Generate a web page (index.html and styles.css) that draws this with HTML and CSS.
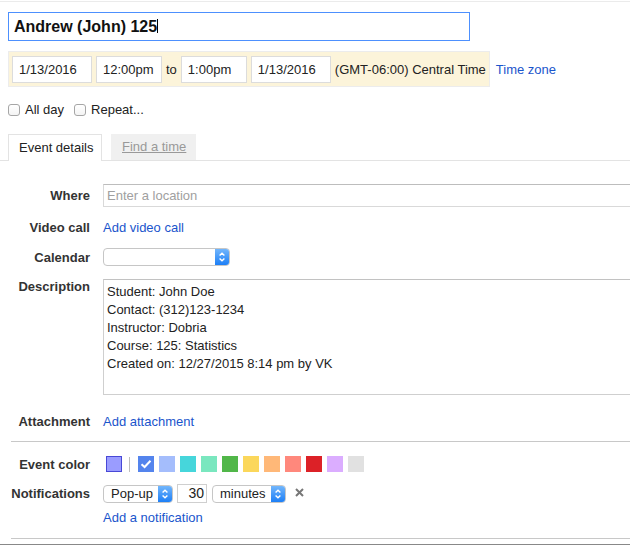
FILE: index.html
```html
<!DOCTYPE html>
<html>
<head>
<meta charset="utf-8">
<title>Event</title>
<link rel="stylesheet" href="styles.css">
</head>
<body>
<div class="page">
  <div class="title">Andrew (John) 125<span class="caret"></span></div>

  <div class="when-row">
    <div class="when">
      <div class="field date">1/13/2016</div>
      <div class="field time">12:00pm</div>
      <span class="to">to</span>
      <div class="field time">1:00pm</div>
      <div class="field date">1/13/2016</div>
      <span class="tz">(GMT-06:00) Central Time</span>
    </div>
    <a class="link tzlink">Time zone</a>
  </div>

  <div class="checks">
    <label class="check"><span class="box"></span>All day</label>
    <label class="check"><span class="box"></span>Repeat...</label>
  </div>

  <div class="tabs">
    <div class="tab active">Event details</div>
    <div class="tab inactive"><span>Find a time</span></div>
  </div>

  <div class="row where">
    <div class="label">Where</div>
    <div class="loc">Enter a location</div>
  </div>

  <div class="row video">
    <div class="label">Video call</div>
    <a class="link">Add video call</a>
  </div>

  <div class="row calendar">
    <div class="label">Calendar</div>
    <div class="select cal">
      <span class="sel-text"></span>
      <span class="sel-btn"><svg width="8" height="12" viewBox="0 0 8 12"><path d="M1.6 4.6 L4 2.2 L6.4 4.6 M1.6 7.4 L4 9.8 L6.4 7.4" fill="none" stroke="#fff" stroke-width="1.4"/></svg></span>
    </div>
  </div>

  <div class="row desc">
    <div class="label top">Description</div>
    <div class="textarea">
      <div>Student: John Doe</div>
      <div>Contact: (312)123-1234</div>
      <div>Instructor: Dobria</div>
      <div>Course: 125: Statistics</div>
      <div>Created on: 12/27/2015 8:14 pm by VK</div>
    </div>
  </div>

  <div class="row attach">
    <div class="label">Attachment</div>
    <a class="link">Add attachment</a>
  </div>

  <div class="rule first"></div>

  <div class="row colors">
    <div class="label">Event color</div>
    <div class="swatches">
      <span class="sw current"></span>
      <span class="sep"></span>
      <span class="sw checked"><svg width="12" height="10" viewBox="0 0 12 10"><path d="M1.5 5.2 L4.6 8 L10.5 1.8" fill="none" stroke="#fff" stroke-width="2"/></svg></span>
      <span class="sw c2"></span>
      <span class="sw c3"></span>
      <span class="sw c4"></span>
      <span class="sw c5"></span>
      <span class="sw c6"></span>
      <span class="sw c7"></span>
      <span class="sw c8"></span>
      <span class="sw c9"></span>
      <span class="sw c10"></span>
      <span class="sw c11"></span>
    </div>
  </div>

  <div class="row notif">
    <div class="label">Notifications</div>
    <div class="notif-controls">
      <div class="select popup">
        <span class="sel-text">Pop-up</span>
        <span class="sel-btn"><svg width="8" height="12" viewBox="0 0 8 12"><path d="M1.6 4.6 L4 2.2 L6.4 4.6 M1.6 7.4 L4 9.8 L6.4 7.4" fill="none" stroke="#fff" stroke-width="1.4"/></svg></span>
      </div>
      <div class="num">30</div>
      <div class="select minutes">
        <span class="sel-text">minutes</span>
        <span class="sel-btn"><svg width="8" height="12" viewBox="0 0 8 12"><path d="M1.6 4.6 L4 2.2 L6.4 4.6 M1.6 7.4 L4 9.8 L6.4 7.4" fill="none" stroke="#fff" stroke-width="1.4"/></svg></span>
      </div>
      <span class="remove"><svg width="9" height="9" viewBox="0 0 9 9"><path d="M1 1 L8 8 M8 1 L1 8" stroke="#777" stroke-width="2"/></svg></span>
    </div>
  </div>

  <div class="row addnotif">
    <div class="label"></div>
    <a class="link">Add a notification</a>
  </div>

  <div class="rule second"></div>
  <div class="bottom-line"></div>
</div>
</body>
</html>
```

FILE: styles.css
```css
html, body {
  margin: 0;
  padding: 0;
  width: 630px;
  height: 545px;
  overflow: hidden;
  background: #fff;
}

body {
  font-family: "Liberation Sans", Arial, sans-serif;
  font-size: 13px;
  color: #222;
}

.page {
  margin-top: 1px;
  border-top: 1px solid #ebebeb;
  width: 630px;
}

.title {
  margin: 10px 0 0 8px;
  width: 462px;
  height: 29px;
  box-sizing: border-box;
  border: 1px solid #4d90fe;
  padding-left: 5px;
  font-size: 16px;
  font-weight: bold;
  line-height: 27px;
  color: #111;
}

.caret {
  display: inline-block;
  width: 1px;
  height: 14px;
  background: #000;
  vertical-align: -1px;
}

.when-row {
  display: flex;
  align-items: center;
  margin: 10px 0 0 8px;
}

.when {
  display: flex;
  align-items: flex-start;
  gap: 4px;
  box-sizing: border-box;
  height: 36px;
  padding: 4px 3px 0 3px;
  background: #fcf4da;
  border: 1px solid #ececec;
}

.field {
  box-sizing: border-box;
  height: 27px;
  border: 1px solid #dcdcdc;
  background: #fff;
  padding-left: 6px;
  line-height: 25px;
}

.field.date { width: 80px; }
.field.time { width: 66px; }

.to, .tz {
  line-height: 27px;
}

.tzlink {
  margin-left: 6px;
}

.link {
  color: #1a55cc;
  cursor: pointer;
}

.checks {
  display: flex;
  align-items: center;
  height: 14px;
  margin: 16px 0 0 8px;
}

.check {
  display: flex;
  align-items: center;
  margin-right: 10px;
  line-height: 14px;
}

.box {
  width: 12px;
  height: 12px;
  box-sizing: border-box;
  border: 1px solid #a6a6a6;
  border-radius: 3px;
  background: linear-gradient(#fff, #f4f4f4);
  margin-right: 5px;
}

.tabs {
  display: flex;
  align-items: flex-end;
  gap: 9px;
  height: 26px;
  margin-top: 17px;
  padding-left: 8px;
  border-bottom: 1px solid #e3e3e3;
}

.tab {
  box-sizing: border-box;
  height: 26px;
  line-height: 26px;
}

.tab.active {
  width: 94px;
  height: 27px;
  margin-bottom: -1px;
  padding-left: 10px;
  background: #fff;
  border: 1px solid #e3e3e3;
  border-bottom: none;
  color: #222;
}

.tab.inactive {
  width: 85px;
  padding-left: 11px;
  background: #f0f0f0;
  color: #999;
}

.tab.inactive span {
  text-decoration: underline;
}

.row {
  display: flex;
  align-items: center;
  height: 18px;
}

.label {
  flex: none;
  width: 90px;
  margin-right: 13px;
  text-align: right;
  font-weight: bold;
  color: #333;
}

.label.top {
  align-self: flex-start;
  line-height: 15px;
}

.row.where { margin-top: 23px; height: 23px; }
.row.video { margin-top: 11px; }
.row.calendar { margin-top: 12px; }
.row.desc { margin-top: 13px; height: 116px; align-items: flex-start; }
.row.attach { margin-top: 17px; }
.row.colors { margin-top: 13px; }
.row.notif { margin-top: 11px; height: 19px; }
.row.addnotif { margin-top: 5px; }

.loc {
  flex: none;
  box-sizing: border-box;
  width: 530px;
  height: 23px;
  border: 1px solid #d9d9d9;
  border-top-color: #bdbdbd;
  padding-left: 3px;
  line-height: 21px;
  color: #a0a0a0;
}

.select {
  display: flex;
  box-sizing: border-box;
  height: 18px;
  border: 1px solid #c6c6c6;
  border-radius: 4px;
  overflow: hidden;
  background: #fff;
}

.sel-text {
  flex: 1;
  padding-left: 7px;
  line-height: 16px;
  color: #222;
}

.sel-btn {
  width: 14px;
  display: flex;
  align-items: center;
  justify-content: center;
  background: linear-gradient(#72b6fc, #1d7ff6);
}

.select.cal { width: 127px; }
.select.popup { width: 70px; }
.select.minutes { width: 74px; margin-left: 1px; }

.textarea {
  flex: none;
  box-sizing: border-box;
  width: 530px;
  height: 116px;
  border: 1px solid #cfcfcf;
  border-top-color: #c2c2c2;
  padding: 3px 3px;
  line-height: 18px;
  color: #222;
}

.rule {
  height: 1px;
  background: #c8c8c8;
  margin-left: 11px;
}

.rule.first { margin-top: 11px; }
.rule.second { margin-top: 12px; }

.bottom-line {
  height: 1px;
  background: #888;
  margin-top: 5px;
}

.swatches {
  display: flex;
  align-items: center;
  gap: 5px;
  padding-left: 3px;
}

.sw {
  display: flex;
  align-items: center;
  justify-content: center;
  width: 16px;
  height: 16px;
  box-sizing: border-box;
}

.sw.current {
  background: #9a9cff;
  border: 1px solid #4848d6;
  margin-right: 2px;
}

.sep {
  width: 1px;
  height: 15px;
  background: #bdbdbd;
  margin-right: 3px;
}

.sw.checked { background: #5484ed; }
.sw.c2 { background: #a4bdfc; }
.sw.c3 { background: #46d6db; }
.sw.c4 { background: #7ae7bf; }
.sw.c5 { background: #51b749; }
.sw.c6 { background: #fbd75b; }
.sw.c7 { background: #ffb878; }
.sw.c8 { background: #ff887c; }
.sw.c9 { background: #dc2127; }
.sw.c10 { background: #dbadff; }
.sw.c11 { background: #e1e1e1; }

.notif-controls {
  display: flex;
  align-items: center;
  gap: 4px;
}

.num {
  box-sizing: border-box;
  width: 30px;
  height: 19px;
  border: 1px solid #cfcfcf;
  text-align: right;
  padding-right: 2px;
  line-height: 17px;
  font-size: 14px;
}

.remove {
  display: flex;
  margin-left: 5px;
  margin-top: -3px;
}
```
